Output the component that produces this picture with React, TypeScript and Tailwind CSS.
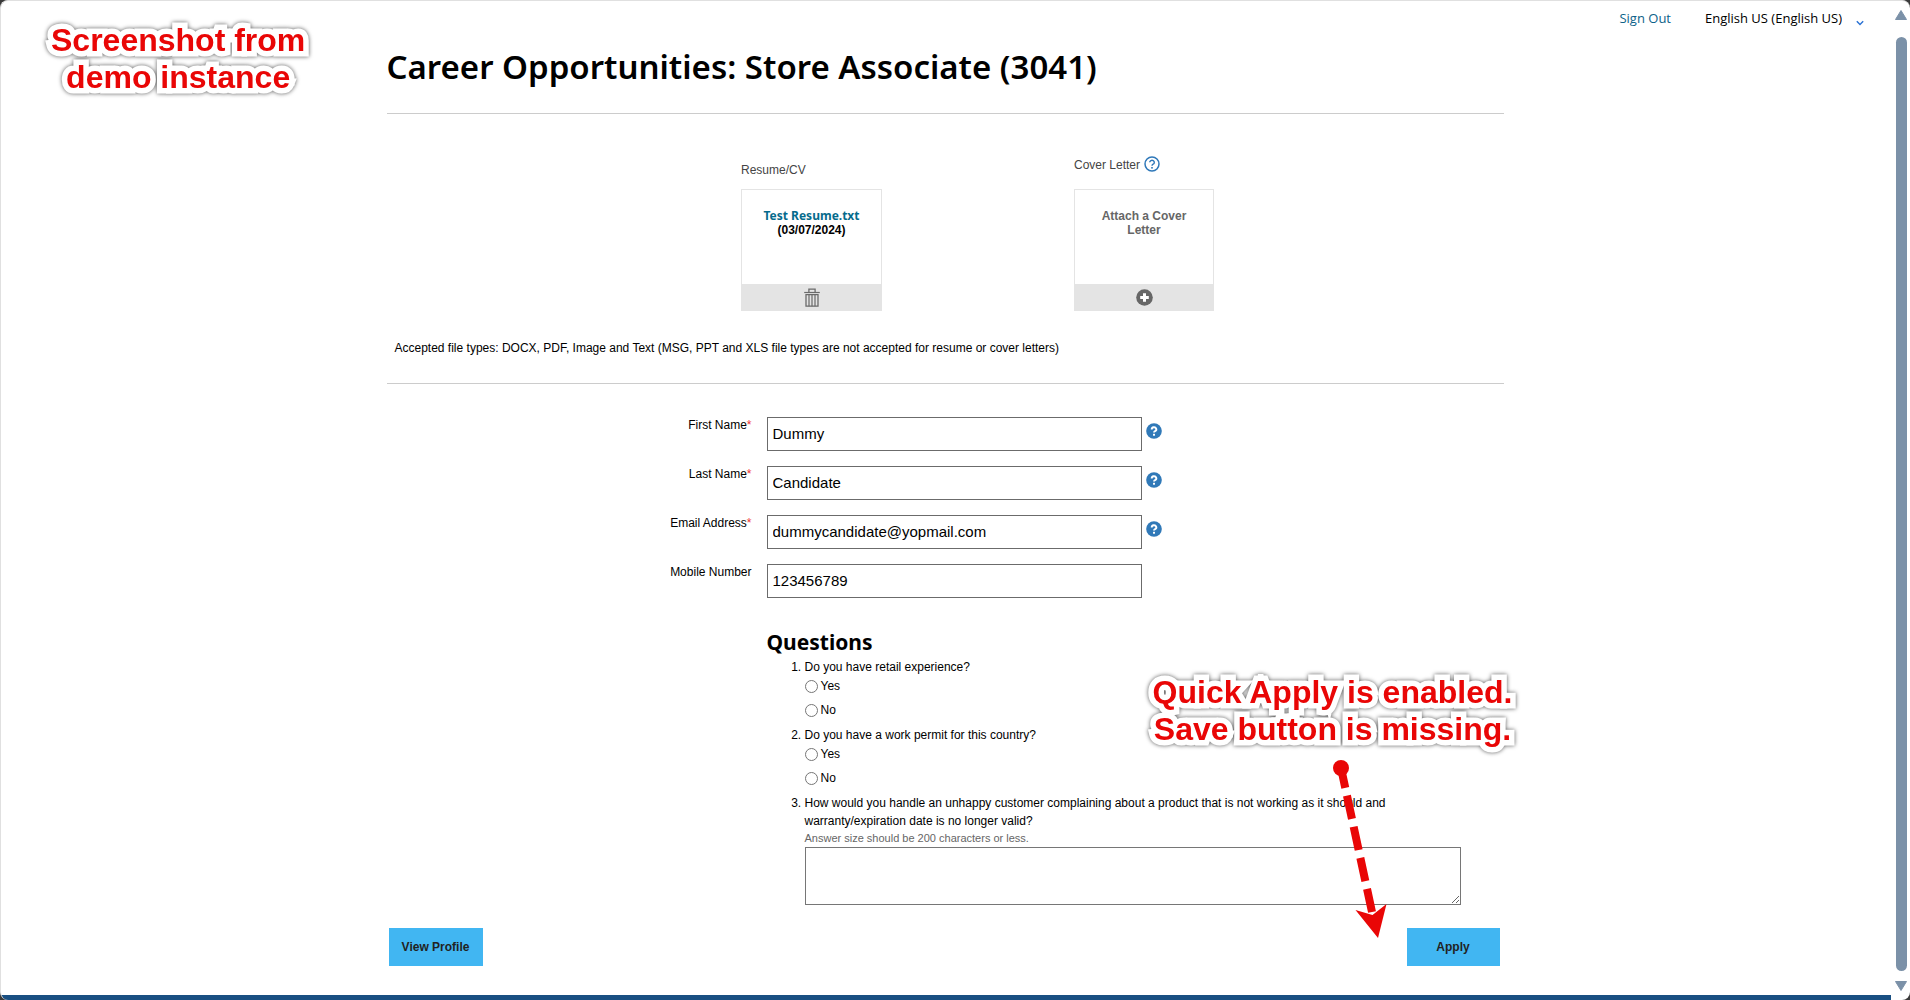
import React from 'react';

const noto = "font-['Noto_Sans','Open_Sans',sans-serif]";

function Chevron() {
  return (
    <svg className="pointer-events-none absolute right-0 top-[9px] h-2 w-2" viewBox="0 0 8 8" fill="none">
      <path d="M0.8 2.2 4 5.6 7.2 2.2" stroke="#2a72d4" strokeWidth="1.4" />
    </svg>
  );
}

function HelpOutline() {
  return (
    <svg className="h-4 w-4" viewBox="0 0 16 16" fill="none">
      <circle cx="8" cy="8" r="7" stroke="#2f78b9" strokeWidth="1.5" />
      <path d="M5.7 6.3a2.3 2.1 0 1 1 3.4 1.9C8.3 8.6 8 8.9 8 9.8" stroke="#2f78b9" strokeWidth="1.4" />
      <rect x="7.2" y="11" width="1.6" height="1.6" fill="#2f78b9" />
    </svg>
  );
}

function HelpSolid() {
  return (
    <svg className="h-4 w-4" viewBox="0 0 16 16" fill="none">
      <circle cx="8" cy="8" r="7.8" fill="#3079b8" />
      <path d="M5.7 6.4a2.3 2.1 0 1 1 3.4 1.8C8.3 8.6 8 8.8 8 9.6" stroke="#fff" strokeWidth="1.9" />
      <rect x="7" y="10.8" width="2" height="1.9" fill="#fff" />
    </svg>
  );
}

function Trash() {
  return (
    <svg className="h-[19px] w-4" viewBox="0 0 16 19" fill="none" stroke="#6a6a6a">
      <path d="M0.2 4.5h15.6" strokeWidth="1.2" />
      <path d="M4.9 4V1.2h6.2V4" strokeWidth="1.3" />
      <path d="M2 6.6h12v11.6H2z" strokeWidth="1.3" />
      <path d="M5 6.6v11.6M8 6.6v11.6M11 6.6v11.6" strokeWidth="1.2" />
    </svg>
  );
}

function PlusCircle() {
  return (
    <svg className="h-[17px] w-[17px]" viewBox="0 0 17 17">
      <circle cx="8.5" cy="8.5" r="8.3" fill="#666" />
      <path d="M7 4.2h3V7h2.8v3H10v2.8H7V10H4.2V7H7z" fill="#fff" />
    </svg>
  );
}

function Note({ lines }: { lines: string[] }) {
  return (
    <p className="text-center text-[32px] font-bold leading-[37px] whitespace-nowrap text-[#e90606] [-webkit-text-stroke:11px_#fff] [paint-order:stroke_fill] [stroke-linejoin:round] [filter:drop-shadow(0_0_2px_rgba(0,0,0,0.65))]">
      {lines.map((l) => (
        <span key={l} className="block">{l}</span>
      ))}
    </p>
  );
}

const fields = [
  { id: 'first', label: 'First Name', value: 'Dummy', required: true },
  { id: 'last', label: 'Last Name', value: 'Candidate', required: true },
  { id: 'email', label: 'Email Address', value: 'dummycandidate@yopmail.com', required: true },
  { id: 'mobile', label: 'Mobile Number', value: '123456789', required: false },
];

function YesNo({ question, name }: { question: string; name: string }) {
  return (
    <li className="pb-2">
      <p id={name}>{question}</p>
      <div role="radiogroup" aria-labelledby={name} className="mt-0.5 flex flex-col gap-2">
        {['Yes', 'No'].map((o) => (
          <label key={o} className="flex items-center gap-[3px] leading-4">
            <input type="radio" name={name} className="h-[13px] w-[13px] appearance-none rounded-full border border-[#767676] bg-white checked:border-4" />
            {o}
          </label>
        ))}
      </div>
    </li>
  );
}

export default function App() {
  return (
    <div className="min-h-screen bg-[#3a3a3a] font-['Liberation_Sans',Arial,sans-serif] text-xs text-black">
      <div className="flex min-h-screen overflow-hidden rounded-lg border-l border-t border-[#e0e0e0] bg-white">
        <main className="relative flex min-w-0 flex-1 flex-col">
          <header className="flex h-9 items-center justify-end gap-[34px] pr-[27px] font-['Open_Sans','Noto_Sans',sans-serif] text-[13px]">
            <a href="#signout" className="text-[#0c6289]">Sign Out</a>
            <div className="relative">
              <select aria-label="Language" className="appearance-none bg-transparent pr-[22px]">
                <option>English US (English US)</option>
              </select>
              <Chevron />
            </div>
          </header>

          <div className="pr-0.5 pt-2">
            <div className="relative mx-auto w-full max-w-[1117px]">
              <h1 className={`border-b border-[#ccc] pb-6 text-[33px] font-semibold leading-[44px] ${noto}`}>
                Career Opportunities: Store Associate (3041)
              </h1>

              <section className="border-b border-[#ccc] pb-[27px] pt-[43px]">
                <div className="flex items-end justify-center gap-48 pl-[65px]">
                  <div>
                    <h2 className="mb-[11px] leading-4 text-[#444]">Resume/CV</h2>
                    <div className="flex h-[122px] w-[141px] flex-col border border-[#e4e4e4]">
                      <p className="flex-1 pt-[19px] text-center font-bold leading-[14px]">
                        <a href="#resume" className={`text-[#056b8c] ${noto}`}>Test Resume.txt</a>
                        <br />
                        (03/07/2024)
                      </p>
                      <button aria-label="Delete resume" className="flex h-[26px] items-center justify-center bg-[#e4e4e4]">
                        <Trash />
                      </button>
                    </div>
                  </div>
                  <div>
                    <h2 className="mb-4 flex h-4 items-center gap-1 leading-4 text-[#444]">
                      Cover Letter
                      <button aria-label="Cover letter help" className="-mt-0.5"><HelpOutline /></button>
                    </h2>
                    <div className="flex h-[122px] w-[140px] flex-col border border-[#e4e4e4]">
                      <p className="flex-1 px-5 pt-[19px] text-center font-bold leading-[14px] text-[#666]">Attach a Cover Letter</p>
                      <button aria-label="Attach a cover letter" className="flex h-[26px] items-center justify-center bg-[#e4e4e4]">
                        <PlusCircle />
                      </button>
                    </div>
                  </div>
                </div>
                <p className="mt-[29px] pl-2 leading-4">
                  Accepted file types: DOCX, PDF, Image and Text (MSG, PPT and XLS file types are not accepted for resume or cover letters)
                </p>
              </section>

              <form>
                <div className="flex flex-col gap-[15px] pt-[33px]">
                  {fields.map((f) => (
                    <div key={f.id} className="flex h-[34px]">
                      <label htmlFor={f.id} className="mr-[15px] w-[365px] text-right leading-4">
                        {f.label}
                        {f.required && <span className="text-[#e33]">*</span>}
                      </label>
                      <input id={f.id} defaultValue={f.value} className="w-[375px] border border-[#6b6b6b] px-[5px] text-[15px]" />
                      {f.required && (
                        <button type="button" aria-label={`${f.label} help`} className="ml-1 mt-1.5 h-4"><HelpSolid /></button>
                      )}
                    </div>
                  ))}
                </div>

                <div className="ml-[380px] mt-[30px]">
                  <h2 className={`text-[21px] font-bold leading-7 ${noto}`}>Questions</h2>
                  <ol className="mt-0.5 list-decimal pl-[38px] leading-[18px]">
                    <YesNo name="retail" question="Do you have retail experience?" />
                    <YesNo name="permit" question="Do you have a work permit for this country?" />
                    <li>
                      <label htmlFor="answer" className="block max-w-[620px]">
                        How would you handle an unhappy customer complaining about a product that is not working as it should and warranty/expiration date is no longer valid?
                      </label>
                      <p className="mt-px text-[11px] leading-[14px] text-[#666]">Answer size should be 200 characters or less.</p>
                      <textarea id="answer" className="mt-0.5 block h-[58px] w-[656px] border border-[#767676]" />
                    </li>
                  </ol>
                </div>

                <div className="mt-[23px] flex justify-between pl-0.5 pr-1 pb-[29px]">
                  <button type="button" className="h-[38px] w-[94px] bg-[#41b6f2] font-bold text-[#222]">View Profile</button>
                  <button type="button" className="h-[38px] w-[93px] bg-[#41b6f2] font-bold text-[#222]">Apply</button>
                </div>
              </form>

              <div className="pointer-events-none absolute right-[-19px] top-[629px] w-[380px]">
                <Note lines={['Quick Apply is enabled.', 'Save button is missing.']} />
                <svg className="ml-[184px] mt-[10px] h-[180px] w-[60px]" viewBox="0 0 60 180">
                  <circle cx="14" cy="10" r="8" fill="#e90606" />
                  <path d="M14 10 45 154" stroke="#e90606" strokeWidth="8" strokeDasharray="23.8 8" strokeDashoffset="3.5" />
                  <path d="M28.5 152 45.5 157 59.5 146 51 180z" fill="#e90606" />
                </svg>
              </div>
            </div>
          </div>

          <div className="absolute left-[50px] top-[21px]">
            <Note lines={['Screenshot from', 'demo instance']} />
          </div>

          <footer className="mt-auto h-[5px] bg-[#194f82]" />
        </main>

        <div aria-hidden="true" className="flex w-[19px] flex-col items-center py-[9px] pl-px">
          <svg className="h-[10px] w-3" viewBox="0 0 12 10"><path d="M6 0.5 11.5 9.5H0.5z" fill="#7b91a8" stroke="#7b91a8" strokeLinejoin="round" /></svg>
          <div className="mb-[10px] mt-[17px] w-[11px] flex-1 rounded-full bg-[#7b91a8]" />
          <svg className="h-[10px] w-3" viewBox="0 0 12 10"><path d="M6 9.5 11.5 0.5H0.5z" fill="#7b91a8" stroke="#7b91a8" strokeLinejoin="round" /></svg>
        </div>
      </div>
    </div>
  );
}
